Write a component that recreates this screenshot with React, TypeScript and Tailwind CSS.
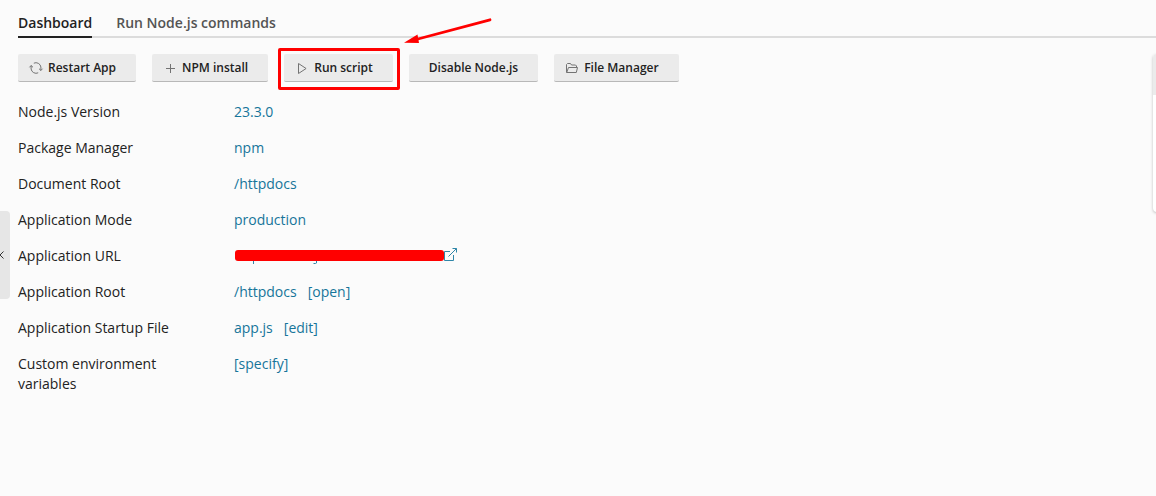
import type { ReactNode } from "react";

const iconProps = {
  width: 12,
  height: 12,
  viewBox: "0 0 12 12",
  fill: "none",
  stroke: "currentColor",
  strokeWidth: 1,
  "aria-hidden": true,
} as const;

function RestartIcon() {
  return (
    <svg {...iconProps} className="shrink-0 overflow-visible text-[#737373]">
      <path d="M3.8 1.2A5 5 0 0 1 10.9 5v3.4M9 6.7l1.9 1.8 1.6-1.8" />
      <path d="M8.2 10.8A5 5 0 0 1 1.1 7V3.6M3 5.3 1.1 3.5-.5 5.3" />
    </svg>
  );
}

function PlusIcon() {
  return (
    <svg {...iconProps} className="shrink-0 text-[#737373]">
      <path d="M6.5 2v9M2 6.5h9" />
    </svg>
  );
}

function PlayIcon() {
  return (
    <svg {...iconProps} className="shrink-0 text-[#737373]">
      <path d="M2.5 1.5v10l7.6-5z" />
    </svg>
  );
}

function FolderIcon() {
  return (
    <svg {...iconProps} className="shrink-0 text-[#737373]">
      <path d="M.5 10.5v-8l1-1h3l1 1.5h4l1 1v1" />
      <path d="M.7 10.5 2.5 5.5h9l-1.2 5z" />
    </svg>
  );
}

function ExternalIcon() {
  return (
    <svg
      width="14"
      height="16"
      viewBox="0 0 14 16"
      fill="none"
      stroke="#2f86a8"
      aria-hidden="true"
    >
      <path d="M6 3.5H.5v9h9V7M4.5 8.5l8-8M8.5.5h4v4" />
    </svg>
  );
}

function ActionButton({ icon, children }: { icon?: ReactNode; children: ReactNode }) {
  return (
    <button
      type="button"
      className={
        "flex h-7 items-center gap-1.5 rounded-xs border-b border-[#b8b8b8] bg-[#ebebeb] pr-5 text-xs leading-5 font-semibold whitespace-nowrap text-[#222] " +
        (icon ? "pl-3" : "pl-5")
      }
    >
      {icon}
      {children}
    </button>
  );
}

function ValueLink({ children }: { children: ReactNode }) {
  return (
    <a href="#" className="text-[#16759a]">
      {children}
    </a>
  );
}

function RedactedUrl() {
  return (
    <a href="#" aria-label="Application URL" className="flex items-center">
      <svg width="210" height="20" viewBox="0 0 210 20" aria-hidden="true">
        <path d="M19.5 14v4M82.5 14v3l-1 .5h-2" fill="none" stroke="#2f86a8" />
        <rect x="1" y="4" width="209" height="11" rx="3" fill="#f00" />
      </svg>
      <ExternalIcon />
    </a>
  );
}

const rows: { label: string; value: ReactNode }[] = [
  { label: "Node.js Version", value: <ValueLink>23.3.0</ValueLink> },
  { label: "Package Manager", value: <ValueLink>npm</ValueLink> },
  { label: "Document Root", value: <ValueLink>/httpdocs</ValueLink> },
  { label: "Application Mode", value: <ValueLink>production</ValueLink> },
  { label: "Application URL", value: <RedactedUrl /> },
  {
    label: "Application Root",
    value: (
      <>
        <ValueLink>/httpdocs</ValueLink>
        <ValueLink>[open]</ValueLink>
      </>
    ),
  },
  {
    label: "Application Startup File",
    value: (
      <>
        <ValueLink>app.js</ValueLink>
        <ValueLink>[edit]</ValueLink>
      </>
    ),
  },
  { label: "Custom environment variables", value: <ValueLink>[specify]</ValueLink> },
];

export default function App() {
  return (
    <div className="relative min-h-screen overflow-hidden bg-[#fbfbfb] font-['Open_Sans',sans-serif] text-sm leading-5 text-[#222]">
      <button
        type="button"
        aria-label="Collapse sidebar"
        className="absolute top-[211px] left-0 flex h-[88px] w-2.5 items-center rounded-r-sm bg-[#e6e6e6] text-[#333]"
      >
        <svg width="4" height="8" viewBox="0 0 4 8" fill="none" stroke="currentColor" aria-hidden="true">
          <path d="M3.5.5 0 4l3.5 3.5" />
        </svg>
      </button>

      <nav className="ml-[18px] flex gap-6 border-b-2 border-[#dcdcdc] pt-[13px] font-semibold">
        <a href="#" aria-current="page" className="-mb-0.5 border-b-2 border-[#222] pb-[3px] text-[#222]">
          Dashboard
        </a>
        <a href="#" className="pb-[3px] text-[#545454]">
          Run Node.js commands
        </a>
      </nav>

      <div className="flex items-start pt-4 pl-[18px]">
        <main className="min-w-0 flex-1">
          <div className="flex flex-wrap gap-4">
            <ActionButton icon={<RestartIcon />}>Restart App</ActionButton>
            <ActionButton icon={<PlusIcon />}>NPM install</ActionButton>
            <div className="relative">
              <ActionButton icon={<PlayIcon />}>Run script</ActionButton>
              <div className="pointer-events-none absolute -top-1.5 -right-[7px] -bottom-2 -left-1.5 rounded-xs border-3 border-[#f00]" />
              <svg
                className="pointer-events-none absolute -top-9 left-[120px]"
                width="88"
                height="26"
                viewBox="0 0 88 26"
                aria-hidden="true"
              >
                <path d="M12 21.5 86 1.8" stroke="#f00" strokeWidth="2.8" strokeLinecap="round" />
                <path d="M0 24.7 13.5 16.5 15 25z" fill="#f00" />
              </svg>
            </div>
            <ActionButton>Disable Node.js</ActionButton>
            <ActionButton icon={<FolderIcon />}>File Manager</ActionButton>
          </div>

          <dl className="mt-5 flex flex-col gap-4">
            {rows.map((row) => (
              <div key={row.label} className="grid grid-cols-[180px_1fr] gap-x-9">
                <dt>{row.label}</dt>
                <dd className="flex gap-[11px]">{row.value}</dd>
              </div>
            ))}
          </dl>
        </main>

        <aside className="-mr-[17px] h-[158px] w-5 overflow-hidden rounded-sm bg-white shadow-[0_1px_3px_rgba(0,0,0,0.25)]">
          <div className="h-[41px] bg-[#ebebeb]" />
        </aside>
      </div>
    </div>
  );
}
